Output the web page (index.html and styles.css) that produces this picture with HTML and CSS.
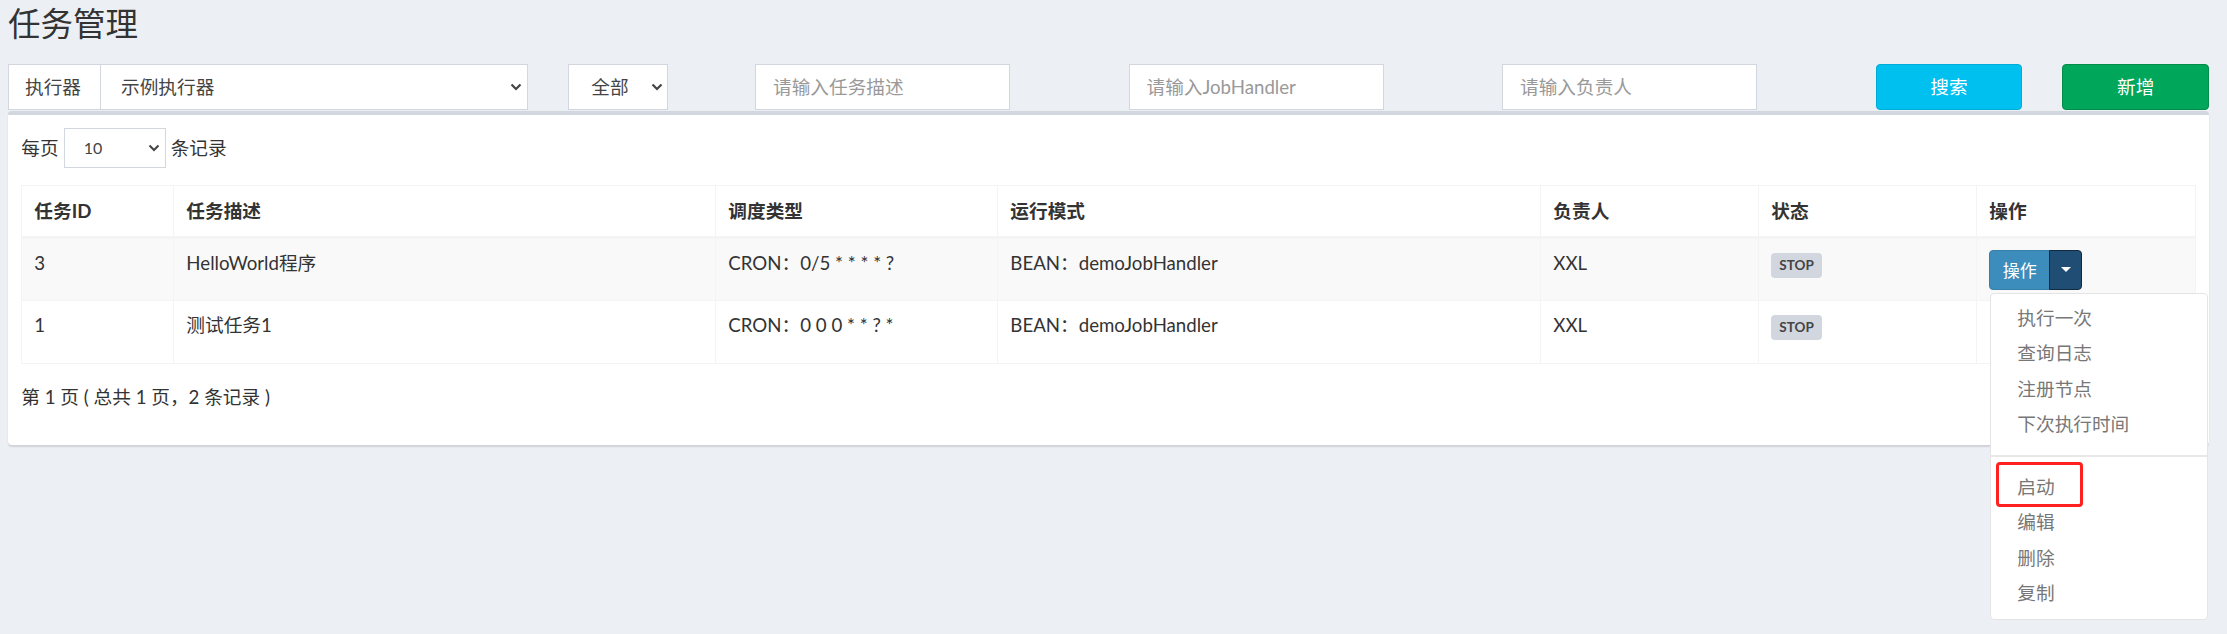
FILE: index.html
```html
<!DOCTYPE html>
<html lang="zh-CN">
<head>
<meta charset="utf-8">
<title>任务管理</title>
<link rel="stylesheet" href="styles.css">
</head>
<body>
<div class="page">
  <h1 class="title">任务管理</h1>

  <div class="filters">
    <div class="col">
      <div class="input-group">
        <span class="addon">执行器</span>
        <div class="select select-wide">
          <span>示例执行器</span>
          <svg class="chev" width="12" height="8" viewBox="0 0 12 8"><polyline points="1.5,1.5 6,6 10.5,1.5" fill="none" stroke="#444" stroke-width="2.2"/></svg>
        </div>
      </div>
    </div>
    <div class="col">
      <div class="select select-status">
        <span>全部</span>
        <svg class="chev" width="12" height="8" viewBox="0 0 12 8"><polyline points="1.5,1.5 6,6 10.5,1.5" fill="none" stroke="#444" stroke-width="2.2"/></svg>
      </div>
    </div>
    <div class="col"><input class="text-input" type="text" placeholder="请输入任务描述"></div>
    <div class="col"><input class="text-input" type="text" placeholder="请输入JobHandler"></div>
    <div class="col"><input class="text-input" type="text" placeholder="请输入负责人"></div>
    <div class="col"><button class="btn btn-info">搜索</button></div>
    <div class="col"><button class="btn btn-success">新增</button></div>
  </div>

  <div class="box">
    <div class="length">
      <span>每页</span>
      <div class="select select-sm">
        <span>10</span>
        <svg class="chev" width="12" height="8" viewBox="0 0 12 8"><polyline points="1.5,1.5 6,6 10.5,1.5" fill="none" stroke="#444" stroke-width="2"/></svg>
      </div>
      <span>条记录</span>
    </div>

    <table class="table">
      <colgroup>
        <col class="w-id"><col class="w-desc"><col class="w-cron"><col class="w-mode"><col class="w-owner"><col class="w-status"><col class="w-op">
      </colgroup>
      <thead>
        <tr>
          <th>任务ID</th>
          <th>任务描述</th>
          <th>调度类型</th>
          <th>运行模式</th>
          <th>负责人</th>
          <th>状态</th>
          <th>操作</th>
        </tr>
      </thead>
      <tbody>
        <tr>
          <td>3</td>
          <td>HelloWorld程序</td>
          <td>CRON：0/5 * * * * ?</td>
          <td>BEAN：demoJobHandler</td>
          <td>XXL</td>
          <td><span class="label">STOP</span></td>
          <td class="op-cell">
            <div class="btn-group">
              <button class="btn-op">操作</button>
              <button class="btn-caret open"><svg width="10" height="5" viewBox="0 0 10 5"><polygon points="0,0 10,0 5,5" fill="#fff"/></svg></button>
              <ul class="menu">
                <li>执行一次</li>
                <li>查询日志</li>
                <li>注册节点</li>
                <li>下次执行时间</li>
                <li class="divider"></li>
                <li class="marked">启动<span class="highlight"></span></li>
                <li>编辑</li>
                <li>删除</li>
                <li>复制</li>
              </ul>
            </div>
          </td>
        </tr>
        <tr>
          <td>1</td>
          <td>测试任务1</td>
          <td>CRON：0 0 0 * * ? *</td>
          <td>BEAN：demoJobHandler</td>
          <td>XXL</td>
          <td><span class="label">STOP</span></td>
          <td>
            <div class="btn-group under">
              <button class="btn-op">操作</button>
              <button class="btn-caret"><svg width="10" height="5" viewBox="0 0 10 5"><polygon points="0,0 10,0 5,5" fill="#fff"/></svg></button>
            </div>
          </td>
        </tr>
      </tbody>
    </table>

    <div class="info">第 1 页 ( 总共 1 页，2 条记录 )</div>
  </div>
</div>
</body>
</html>
```

FILE: styles.css
```css
html, body {
  margin: 0;
  padding: 0;
  background: #ecf0f5;
  overflow: visible;
}

body {
  font-family: "Lato", "Noto Sans CJK SC", sans-serif;
  font-size: 18.67px;
  line-height: 26.67px;
  color: #333;
}

.page {
  box-sizing: border-box;
  min-height: 634px;
  padding: 4px 18px 0 8px;
}

.title {
  margin: 0;
  height: 40px;
  font-size: 32.5px;
  font-weight: 400;
  line-height: 40px;
  color: #333;
}

/* filter row */
.filters {
  display: grid;
  grid-template-columns: 3fr 1fr 2fr 2fr 2fr 1fr 1fr;
  margin: 20px -20px 0;
}

.col {
  padding: 0 20px;
  min-width: 0;
}

.input-group {
  display: flex;
  height: 46px;
}

.addon {
  display: flex;
  align-items: center;
  box-sizing: border-box;
  width: 92px;
  padding-left: 16px;
  background: #fff;
  border: 1px solid #d2d6de;
  border-right: 0;
  color: #444;
}

.select {
  display: flex;
  align-items: center;
  justify-content: space-between;
  box-sizing: border-box;
  height: 46px;
  background: #fff;
  border: 1px solid #d2d6de;
  color: #444;
}

.select-wide {
  flex: 1;
  padding: 0 5px 0 20px;
}

.select-status {
  width: 100px;
  padding: 0 4px 0 22px;
}

.select-sm {
  width: 102px;
  height: 40px;
  padding: 0 5px 0 19px;
  font-size: 16px;
}

.chev {
  display: block;
  flex: none;
}

.text-input {
  display: block;
  box-sizing: border-box;
  width: 255px;
  height: 46px;
  margin: 0;
  padding: 0 17px;
  background: #fff;
  border: 1px solid #d2d6de;
  border-radius: 0;
  font: inherit;
  color: #555;
  outline: none;
}

.text-input::placeholder {
  color: #999;
  opacity: 1;
}

.btn {
  display: block;
  box-sizing: border-box;
  width: 100%;
  height: 46px;
  margin: 0;
  border: 1px solid;
  border-radius: 4px;
  font: inherit;
  color: #fff;
  cursor: pointer;
}

.btn-info {
  background: #00c0ef;
  border-color: #00acd6;
}

.btn-success {
  background: #00a65a;
  border-color: #008d4c;
}

/* box */
.box {
  position: relative;
  margin-top: 1px;
  background: #fff;
  border-top: 4px solid #d2d6de;
  border-radius: 4px;
  box-shadow: 0 1.5px 1.5px rgba(0, 0, 0, 0.12);
  padding: 13.33px 13.33px 34.7px;
  overflow: visible;
}

.length {
  display: flex;
  align-items: center;
  gap: 5px;
  height: 40px;
}

.table {
  width: 100%;
  margin-top: 16.67px;
  border-collapse: collapse;
  table-layout: fixed;
  border: 1px solid #f4f4f4;
}

.w-id { width: 152px; }
.w-desc { width: 542px; }
.w-cron { width: 282px; }
.w-mode { width: 543px; }
.w-owner { width: 218px; }
.w-status { width: 218px; }
.w-op { width: 219px; }

.table th,
.table td {
  border: 1px solid #f4f4f4;
  text-align: left;
  vertical-align: top;
  line-height: 26.67px;
  white-space: nowrap;
  overflow: visible;
}

.table th {
  padding: 11.67px 12px;
  border-bottom-width: 3px;
  font-weight: 700;
}

.table td {
  padding: 10.67px 12px;
}

.table tbody tr:nth-child(odd) {
  background: #f9f9f9;
}

.op-cell {
  position: relative;
  z-index: 5;
}

.label {
  display: inline-block;
  vertical-align: top;
  margin-top: 3px;
  height: 25px;
  padding: 0 8px;
  border-radius: 4px;
  background: #d2d6de;
  color: #444;
  font-size: 13.5px;
  font-weight: 700;
  line-height: 25px;
}

.btn-group {
  position: relative;
  display: inline-flex;
  vertical-align: top;
}

.btn-group.under {
  visibility: hidden;
}

.btn-op {
  box-sizing: border-box;
  height: 40px;
  margin: 0;
  padding: 0 12.5px;
  background: #3c8dbc;
  border: 1px solid #367fa9;
  border-radius: 4px 0 0 4px;
  font-family: inherit;
  font-size: 17px;
  color: #fff;
}

.btn-caret {
  display: flex;
  align-items: center;
  justify-content: center;
  box-sizing: border-box;
  width: 33px;
  height: 40px;
  margin: 0 0 0 -1px;
  padding: 0;
  background: #3c8dbc;
  border: 1px solid #367fa9;
  border-radius: 0 4px 4px 0;
}

.btn-caret.open {
  background: #204d74;
  border-color: #122b40;
}

.btn-caret svg {
  display: block;
}

.menu {
  position: absolute;
  top: calc(100% + 3px);
  left: 1px;
  z-index: 10;
  box-sizing: border-box;
  width: 218px;
  margin: 0;
  padding: 7px 0;
  list-style: none;
  background: #fff;
  border: 1px solid #e4e4e4;
  border-radius: 4px;
}

.menu li {
  position: relative;
  padding: 4px 26px;
  line-height: 27.5px;
  color: #777;
  white-space: nowrap;
}

.menu li.divider {
  height: 2px;
  padding: 0;
  margin: 12.5px 0;
  background: #e8e8e8;
}

.highlight {
  position: absolute;
  left: 5px;
  top: -8px;
  box-sizing: border-box;
  width: 87px;
  height: 45px;
  border: 3px solid #ff2020;
  border-radius: 4px;
}

.info {
  margin-top: 20px;
  line-height: 26.67px;
}
```
